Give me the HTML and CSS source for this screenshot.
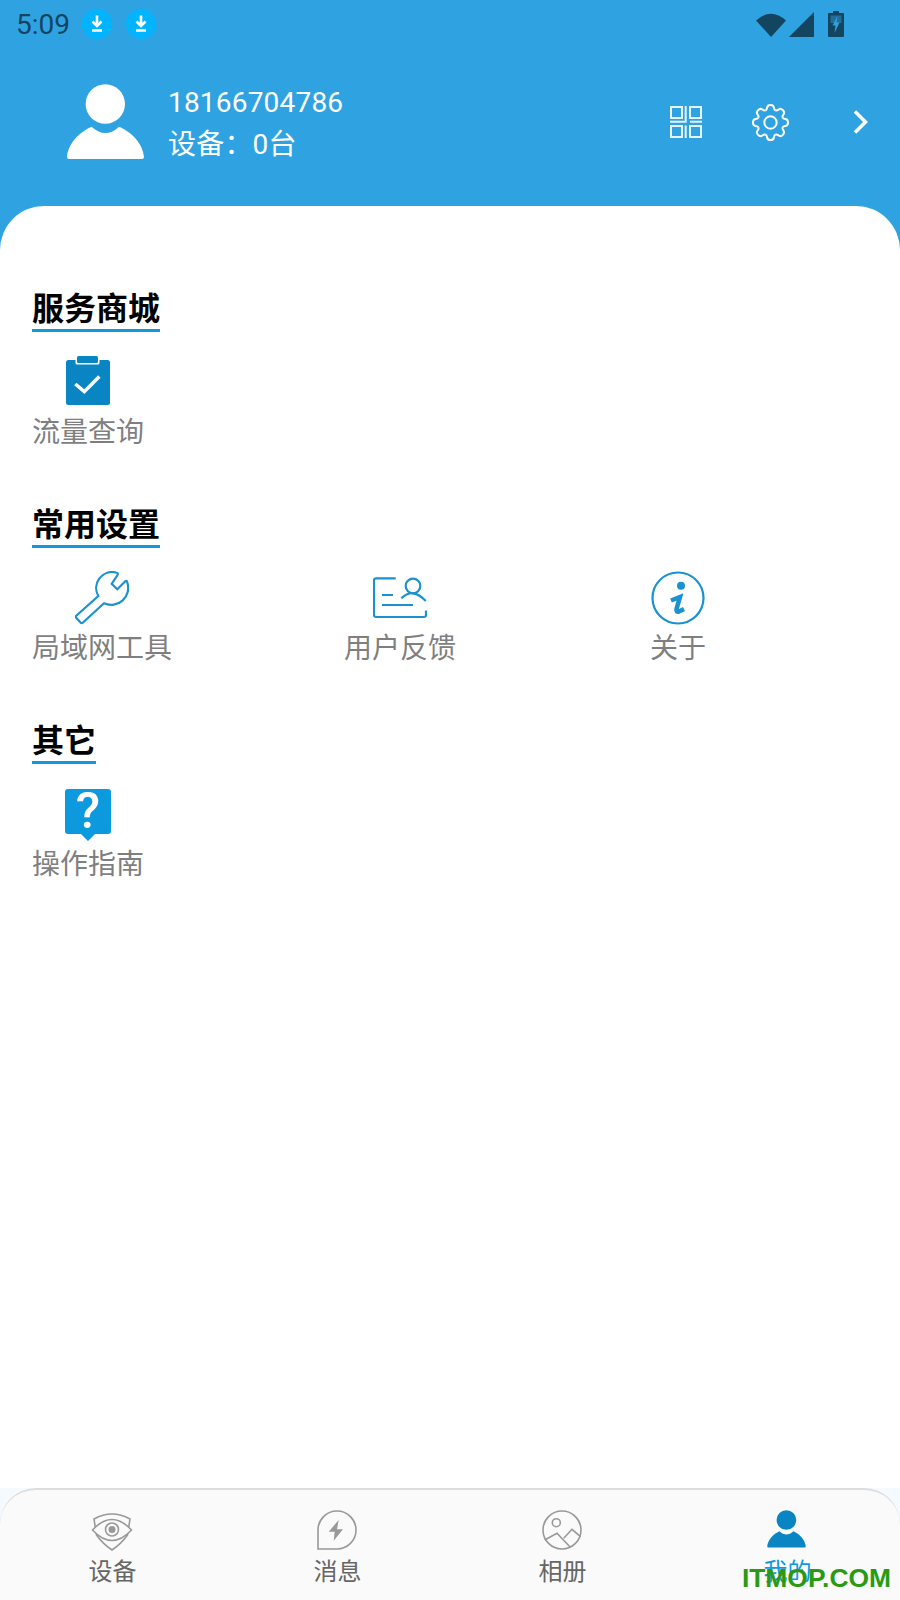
FILE: index.html
```html
<!DOCTYPE html>
<html lang="zh-CN">
<head>
  <meta charset="UTF-8" />
  <meta name="viewport" content="width=device-width, initial-scale=1.0"/>
  <title>我的</title>
  <link rel="stylesheet" href="styles.css">
</head>
<body>
  <svg class="defs" width="0" height="0" aria-hidden="true">
    <symbol id="person" viewBox="0 0 77 76">
      <circle cx="38.3" cy="20" r="19.7"/>
      <path d="M0 73C1 60 12 48 24.7 42.7C29 47 34 49 38.3 49C43 49 48 47 52 42.7C65 48 76 60 77 73Q77 75 75 75H2Q0 75 0 73Z"/>
    </symbol>
    <symbol id="down" viewBox="0 0 30 30">
      <circle cx="15" cy="15" r="15" fill="#00b4ff"/>
      <path d="M15 6.5V16M10.5 12.5L15 17L19.5 12.5M10 21.5H20" fill="none" stroke="#fff" stroke-width="2.6"/>
    </symbol>
    <path id="tooth" d="M-4.97-12Q-3.5-13-3.4-15Q-3-17.5 0-17.5Q3-17.5 3.4-15Q3.5-13 4.97-12"/>
  </svg>

  <div class="app">
    <div class="status-bar">
      <span class="time">5:09</span>
      <svg class="dl-icon"><use href="#down"/></svg>
      <svg class="dl-icon"><use href="#down"/></svg>
      <div class="status-right">
        <svg class="wifi" viewBox="0 0 30 25"><path d="M0 8.5Q15-5 30 8.5L15 25Z"/></svg>
        <svg class="signal" viewBox="0 0 25 25"><path d="M0 25H25V0Z"/></svg>
        <svg class="battery" viewBox="0 0 16 26">
          <path d="M5 0H11V2H15Q16 2 16 3V25Q16 26 15 26H1Q0 26 0 25V3Q0 2 1 2H5Z"/>
          <path d="M2.5 4.5H13.5V12H2.5Z" fill="#2f8fc4" opacity=".55"/>
          <path d="M9.5 5L4.5 14.5H7.5L6.5 22L11.5 11.5H8.5Z" fill="#2fa3e2"/>
        </svg>
      </div>
    </div>

    <div class="profile">
      <svg class="avatar"><use href="#person"/></svg>
      <div class="profile-text">
        <div>18166704786</div>
        <div>设备：0台</div>
      </div>
      <div class="profile-actions">
        <svg class="qr" viewBox="0 0 32 32">
          <rect x="1" y="1" width="11" height="11"/>
          <rect x="20" y="1" width="11" height="11"/>
          <rect x="1" y="20" width="11" height="11"/>
          <rect x="20" y="20" width="11" height="11"/>
          <path d="M15.7 0V15.7H0M20 15.7H32M15.7 19.5V32"/>
        </svg>
        <svg class="gear" viewBox="-18.5 -18.5 37 37">
          <use href="#tooth"/>
          <use href="#tooth" transform="rotate(45)"/>
          <use href="#tooth" transform="rotate(90)"/>
          <use href="#tooth" transform="rotate(135)"/>
          <use href="#tooth" transform="rotate(180)"/>
          <use href="#tooth" transform="rotate(225)"/>
          <use href="#tooth" transform="rotate(270)"/>
          <use href="#tooth" transform="rotate(315)"/>
          <circle r="6.2"/>
        </svg>
        <svg class="chevron" viewBox="0 0 15 26"><path d="M2 2.5L12.5 13L2 23.5"/></svg>
      </div>
    </div>

    <div class="sheet">
      <section class="group">
        <h2 class="group-title">服务商城</h2>
        <div class="group-items">
          <div class="item">
            <div class="item-icon">
              <svg class="icon-clip" viewBox="0 0 46 50">
                <rect x="1" y="4" width="44" height="45" rx="2.5" fill="#0a85c4"/>
                <rect x="10.5" y="-1" width="24" height="9.500" rx="1.500" fill="#fff"/>
                <rect x="12" y="0" width="21" height="7" rx="1.500" fill="#0a85c4"/>
                <path d="M10.300 28L19.300 35.700L34.300 20.400" fill="none" stroke="#fff" stroke-width="3.500"/>
              </svg>
            </div>
            <span class="item-label">流量查询</span>
          </div>
        </div>
      </section>

      <section class="group">
        <h2 class="group-title">常用设置</h2>
        <div class="group-items">
          <div class="item">
            <div class="item-icon">
              <svg class="icon-line icon-wrench" viewBox="0 0 54 54">
                <path d="M1 45L23.300 25A16 16 0 0 1 41 1.500Q43.500 2 42.500 4L36.700 12.800L42.300 18.300L50 10.500Q52 9 52.300 11.500A17 17 0 0 1 29 32.300L8 51.500Q6.700 52.800 5.500 51.500L1.500 47Q0.300 46 1 45Z"/>
              </svg>
            </div>
            <span class="item-label">局域网工具</span>
          </div>
          <div class="item">
            <div class="item-icon">
              <svg class="icon-line icon-feedback" viewBox="0 0 54 42">
                <path d="M22.700 1.300H3Q1 1.300 1 3.300V38Q1 40 3 40H51Q53 40 53 38V33.500"/>
                <path d="M9 18H20M9 28H40"/>
                <circle cx="40" cy="9" r="7.300"/>
                <path d="M28.300 21.300Q40 10 52.700 24"/>
              </svg>
            </div>
            <span class="item-label">用户反馈</span>
          </div>
          <div class="item">
            <div class="item-icon">
              <svg class="icon-line icon-info" viewBox="0 0 54 54">
                <circle cx="27" cy="27" r="25.500"/>
                <circle class="fill" cx="30" cy="14.700" r="4"/>
                <path class="stem" d="M20 29.500L29 26L25.500 38Q25 41.500 28 40.500L33 38"/>
              </svg>
            </div>
            <span class="item-label">关于</span>
          </div>
        </div>
      </section>

      <section class="group">
        <h2 class="group-title">其它</h2>
        <div class="group-items">
          <div class="item">
            <div class="item-icon">
              <div class="icon-help">
                <svg viewBox="0 0 46 53">
                  <path d="M3 0H43Q46 0 46 3V42Q46 45 43 45H30L23 52L16 45H3Q0 45 0 42V3Q0 0 3 0Z" fill="#0d99de"/>
                </svg>
                <span class="help-mark">?</span>
              </div>
            </div>
            <span class="item-label">操作指南</span>
          </div>
        </div>
      </section>
    </div>

    <div class="tabbar-wrap">
      <nav class="tabbar">
        <div class="tab">
          <svg class="tab-icon" viewBox="0 0 40 40">
            <path d="M2 9Q20-1 38 9L35.500 25Q29 34 20 40Q11 34 4.500 25Z"/>
            <path d="M0.500 20Q20-1 39.500 20Q20 41 0.500 20Z" fill="#fafafa"/>
            <circle cx="20" cy="19.500" r="6.500"/>
            <circle class="fill" cx="20" cy="19.500" r="3.500"/>
          </svg>
          <span>设备</span>
        </div>
        <div class="tab">
          <svg class="tab-icon" viewBox="0 0 40 40">
            <path d="M1 39V20A19 19 0 1 1 20 39Z"/>
            <path class="fill" d="M21.700 10L11.700 21.700H17.700L16.700 30.700L26 19.300H20Z"/>
          </svg>
          <span>消息</span>
        </div>
        <div class="tab">
          <svg class="tab-icon" viewBox="0 0 40 40">
            <circle cx="20" cy="20" r="19"/>
            <circle cx="14.300" cy="12.700" r="4"/>
            <path d="M2.700 30L15 23.300L28.300 37.300M21.700 28.300L30 19.300L38.500 26.700"/>
          </svg>
          <span>相册</span>
        </div>
        <div class="tab tab-active">
          <svg class="tab-person"><use href="#person"/></svg>
          <span>我的</span>
        </div>
      </nav>
      <div class="watermark">ITMOP.COM</div>
    </div>
  </div>
</body>
</html>
```

FILE: styles.css
```css
body {
  margin: 0;
  padding: 0;
  font-family: Roboto, 'Noto Sans CJK SC', sans-serif;
  background-color: #fff;
}
.defs {
  display: block;
  height: 0;
}
.app {
  width: 900px;
  height: 1600px;
  display: flex;
  flex-direction: column;
  background-color: #2fa3e2;
  overflow: hidden;
}
.status-bar {
  display: flex;
  align-items: center;
  height: 48px;
  padding-left: 16px;
}
.time {
  font-size: 28px;
  color: #134560;
  margin-right: 12px;
}
.dl-icon {
  width: 30px;
  height: 30px;
  margin-right: 14px;
  fill: #00b4ff;
}
.status-right {
  display: flex;
  align-items: center;
  margin-left: auto;
  padding-right: 56px;
  fill: #134560;
}
.wifi {
  width: 30px;
  height: 25px;
  margin-right: 3px;
}
.signal {
  width: 25px;
  height: 25px;
  margin-top: 1px;
  margin-right: 14px;
}
.battery {
  width: 16px;
  height: 26px;
}
.profile {
  display: flex;
  align-items: flex-start;
  height: 158px;
  padding: 36px 32px 0 67px;
  box-sizing: border-box;
}
.avatar {
  width: 77px;
  height: 76px;
  fill: #fff;
  margin-right: 24px;
}
.profile-text {
  color: #fff;
  font-size: 28px;
  line-height: 42px;
  letter-spacing: 0.2px;
  margin-top: -2px;
}
.profile-actions {
  display: flex;
  align-items: center;
  height: 76px;
  margin-left: auto;
}
.qr {
  width: 32px;
  height: 32px;
  margin-right: 50px;
  fill: none;
  stroke: #e6f4fc;
  stroke-width: 2;
}
.gear {
  width: 37px;
  height: 37px;
  margin-right: 64px;
  fill: none;
  stroke: #fff;
  stroke-width: 2;
  overflow: visible;
}
.chevron {
  width: 15px;
  height: 26px;
  fill: none;
  stroke: #fff;
  stroke-width: 3.5;
}
.sheet {
  flex: 1;
  background-color: #fff;
  border-radius: 44px 44px 0 0;
  padding: 83px 32px 0;
}
.group {
  margin-bottom: 54px;
}
.group-title {
  display: table;
  margin: 0;
  font-size: 32px;
  font-weight: 700;
  line-height: 40px;
  color: #000;
  border-bottom: 3px solid #0d99de;
}
.group-items {
  display: grid;
  grid-template-columns: 312px 306px 1fr;
  justify-items: start;
  margin-top: 22px;
}
.item {
  display: flex;
  flex-direction: column;
  align-items: center;
}
.item-icon {
  display: flex;
  align-items: center;
  justify-content: center;
  height: 56px;
}
.item-label {
  margin-top: 5px;
  font-size: 28px;
  line-height: 36px;
  color: #7f7f7f;
}
.icon-clip {
  width: 46px;
  height: 50px;
  margin-bottom: 2px;
  overflow: visible;
}
.icon-line {
  fill: none;
  stroke: #1a92cf;
  stroke-width: 2.2;
}
.icon-line .fill {
  fill: #1a92cf;
  stroke: none;
}
.icon-line .stem {
  stroke-width: 4.5;
}
.icon-wrench,
.icon-info {
  width: 54px;
  height: 54px;
}
.icon-feedback {
  width: 54px;
  height: 42px;
}
.icon-help {
  position: relative;
  width: 46px;
  height: 53px;
  margin-top: 2px;
}
.icon-help svg {
  display: block;
  width: 46px;
  height: 53px;
}
.help-mark {
  position: absolute;
  top: 0;
  left: 0;
  width: 46px;
  font-family: Roboto, sans-serif;
  font-size: 50px;
  font-weight: 500;
  line-height: 45px;
  text-align: center;
  color: #fff;
}
.tabbar-wrap {
  position: relative;
  background-color: #f4fafe;
}
.tabbar {
  display: grid;
  grid-template-columns: repeat(4, 1fr);
  height: 112px;
  box-sizing: border-box;
  padding-top: 20px;
  background-color: #fafafa;
  border-top: 2px solid #ddd;
  border-radius: 36px 36px 0 0;
}
.tab {
  display: flex;
  flex-direction: column;
  align-items: center;
  font-size: 24px;
  line-height: 30px;
  color: #666;
}
.tab span {
  margin-top: 7px;
}
.tab-icon {
  width: 40px;
  height: 40px;
  margin-right: 2px;
  fill: none;
  stroke: #999;
  stroke-width: 1.6;
  overflow: visible;
}
.tab-icon .fill {
  fill: #999;
  stroke: none;
}
.tab-person {
  width: 39px;
  height: 38px;
  margin: 0 2px 2px 0;
  fill: #0a85c4;
}
.tab-active {
  color: #1098e0;
}
.watermark {
  position: absolute;
  right: 9px;
  bottom: 9px;
  font-family: 'Liberation Sans', sans-serif;
  font-size: 26.4px;
  font-weight: 700;
  line-height: 26px;
  color: #2a9a12;
}
```
